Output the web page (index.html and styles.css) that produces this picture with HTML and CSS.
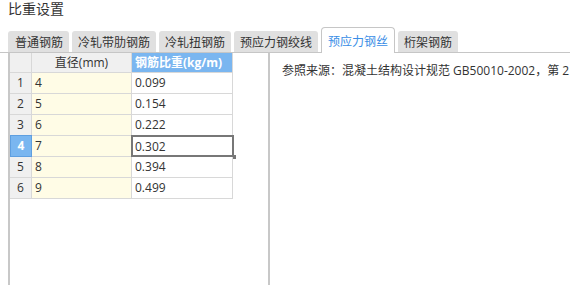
FILE: index.html
```html
<!DOCTYPE html>
<html lang="zh">
<head>
<meta charset="utf-8">
<link rel="stylesheet" href="styles.css">
</head>
<body>
<div class="title">比重设置</div>
<div class="tabs">
  <div class="tab first">普通钢筋</div>
  <div class="tab">冷轧带肋钢筋</div>
  <div class="tab">冷轧扭钢筋</div>
  <div class="tab">预应力钢绞线</div>
  <div class="tab active">预应力钢丝</div>
  <div class="tab">桁架钢筋</div>
</div>
<div class="content">
  <div class="left">
    <div class="grid">
      <div class="cell hdr rh"></div>
      <div class="cell hdr c1">直径(mm)</div>
      <div class="cell hdr c2 sel-col">钢筋比重(kg/m)</div>

      <div class="cell rh">1</div><div class="cell c1 y">4</div><div class="cell c2">0.099</div>
      <div class="cell rh">2</div><div class="cell c1 y">5</div><div class="cell c2">0.154</div>
      <div class="cell rh">3</div><div class="cell c1 y">6</div><div class="cell c2">0.222</div>
      <div class="cell rh sel-row">4</div><div class="cell c1 y">7</div><div class="cell c2 current">0.302<span class="handle"></span></div>
      <div class="cell rh">5</div><div class="cell c1 y">8</div><div class="cell c2">0.394</div>
      <div class="cell rh">6</div><div class="cell c1 y">9</div><div class="cell c2">0.499</div>
    </div>
  </div>
  <div class="right">
    <div class="note">参照来源：混凝土结构设计规范 GB50010-2002，第 2</div>
  </div>
</div>
</body>
</html>
```

FILE: styles.css
```css
html, body {
  margin: 0;
  padding: 0;
  background: #ffffff;
  overflow: hidden;
}
body {
  width: 570px;
  height: 285px;
  font-family: "Open Sans", "Noto Sans CJK SC", sans-serif;
  font-size: 12px;
  color: #333333;
}
.title {
  padding-left: 8px;
  font-size: 14px;
  line-height: 16px;
  height: 27px;
  color: #333333;
  font-family: "Noto Sans CJK SC", sans-serif;
}
.tabs {
  display: flex;
  align-items: flex-end;
  gap: 3px;
  height: 25px;
  padding-left: 8px;
  border-bottom: 1px solid #c6c6c6;
  box-sizing: content-box;
}
.tab {
  height: 21px;
  line-height: 21px;
  padding: 0 6px;
  background: #e0e0e0;
  border-radius: 3px 3px 0 0;
  color: #333333;
  white-space: nowrap;
  font-family: "Noto Sans CJK SC", sans-serif;
  font-size: 12px;
}
.tab.first {
  padding: 0 6px 0 7px;
}
.tab.active {
  height: 25px;
  line-height: 25px;
  background: #ffffff;
  border: 1px solid #c6c6c6;
  border-bottom: none;
  margin-bottom: -1px;
  padding: 0 6px;
  color: #3a8ee6;
  border-radius: 4px 4px 0 0;
}
.content {
  display: flex;
  height: 232px;
}
.left {
  margin-left: 8px;
  width: 258px;
  border-left: 2px solid #c8c8c8;
  border-right: 2px solid #c8c8c8;
}
.grid {
  display: grid;
  grid-template-columns: 22px 100px 101px;
  grid-template-rows: 20px repeat(6, 21px);
  width: 223px;
}
.cell {
  position: relative;
  box-sizing: border-box;
  border-right: 1px solid #d8d8d8;
  border-bottom: 1px solid #d8d8d8;
  line-height: 20px;
  padding-left: 3px;
  white-space: nowrap;
  color: #333333;
}
.hdr {
  background: #f0f0f0;
  line-height: 19px;
}
.hdr.c1 {
  text-align: center;
  padding-left: 0;
}
.hdr.sel-col {
  background: #7ab6f0;
  color: #ffffff;
  font-weight: bold;
  padding-left: 3px;
}
.rh {
  background: #f0f0f0;
  text-align: center;
  padding-left: 0;
}
.rh.sel-row {
  background: #7ab6f0;
  color: #ffffff;
  font-weight: bold;
  border: 1px solid #5f9fe0;
  margin: -1px 0 0 0;
  line-height: 20px;
}
.y {
  background: #fffce6;
}
.current {
  border: 2px solid #777777;
  margin: -1px -1px 0 -1px;
  padding-left: 2px;
  line-height: 19px;
}
.handle {
  position: absolute;
  right: -4px;
  bottom: -4px;
  width: 4px;
  height: 4px;
  background: #777777;
}
.right {
  flex: 1;
  overflow: hidden;
  padding-left: 12px;
  padding-top: 10px;
}
.note {
  white-space: nowrap;
  line-height: 16px;
  color: #333333;
}
```
